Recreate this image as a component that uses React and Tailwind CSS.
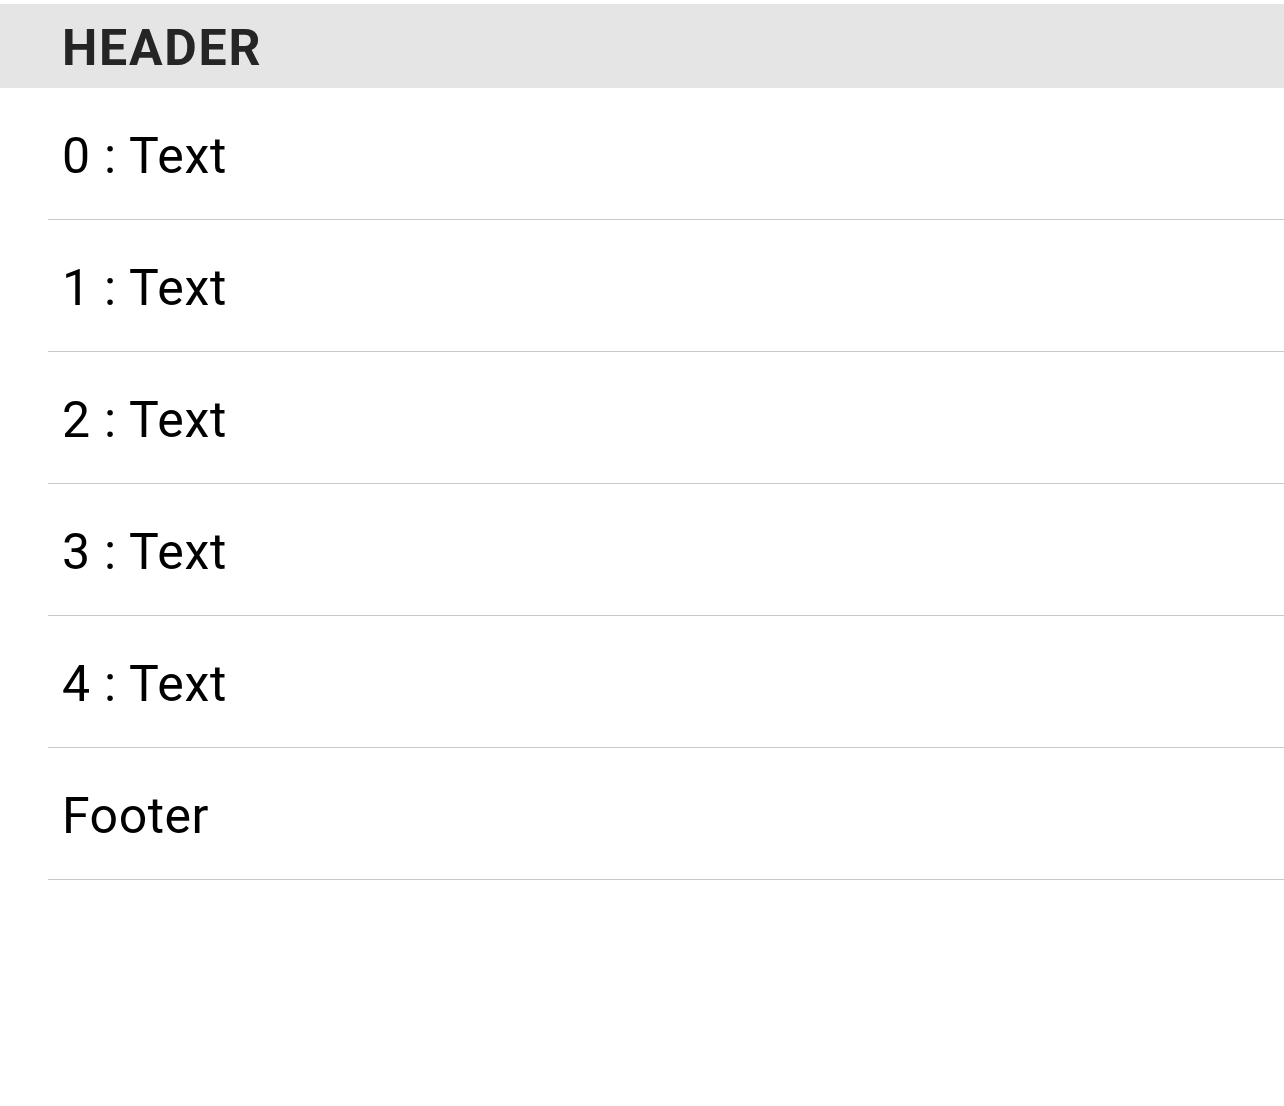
import React from 'react';

export default function App() {
  const rows = [0, 1, 2, 3, 4];

  return (
    <div className="min-h-[1106px] bg-white pt-1" style={{ fontFamily: 'Roboto, "Noto Sans", sans-serif' }}>
      {/* Header */}
      <div className="flex h-[84px] items-center bg-[#e5e5e5] pl-[62px]">
        <span className="pt-1 text-[50px] font-bold leading-none tracking-[0.035em] text-[#252525]">HEADER</span>
      </div>

      {/* Rows */}
      <div className="ml-12">
        {rows.map((i) => (
          <div key={i} className="flex h-[132px] items-center border-b border-[#c8c8c8] pl-[14px]">
            <span className="pt-1 text-[50px] leading-none tracking-[0.015em] text-black">{i} : Text</span>
          </div>
        ))}
        <div className="flex h-[132px] items-center border-b border-[#c8c8c8] pl-[14px]">
          <span className="pt-1 text-[50px] leading-none tracking-[0.01em] text-black">Footer</span>
        </div>
      </div>
    </div>
  );
}
